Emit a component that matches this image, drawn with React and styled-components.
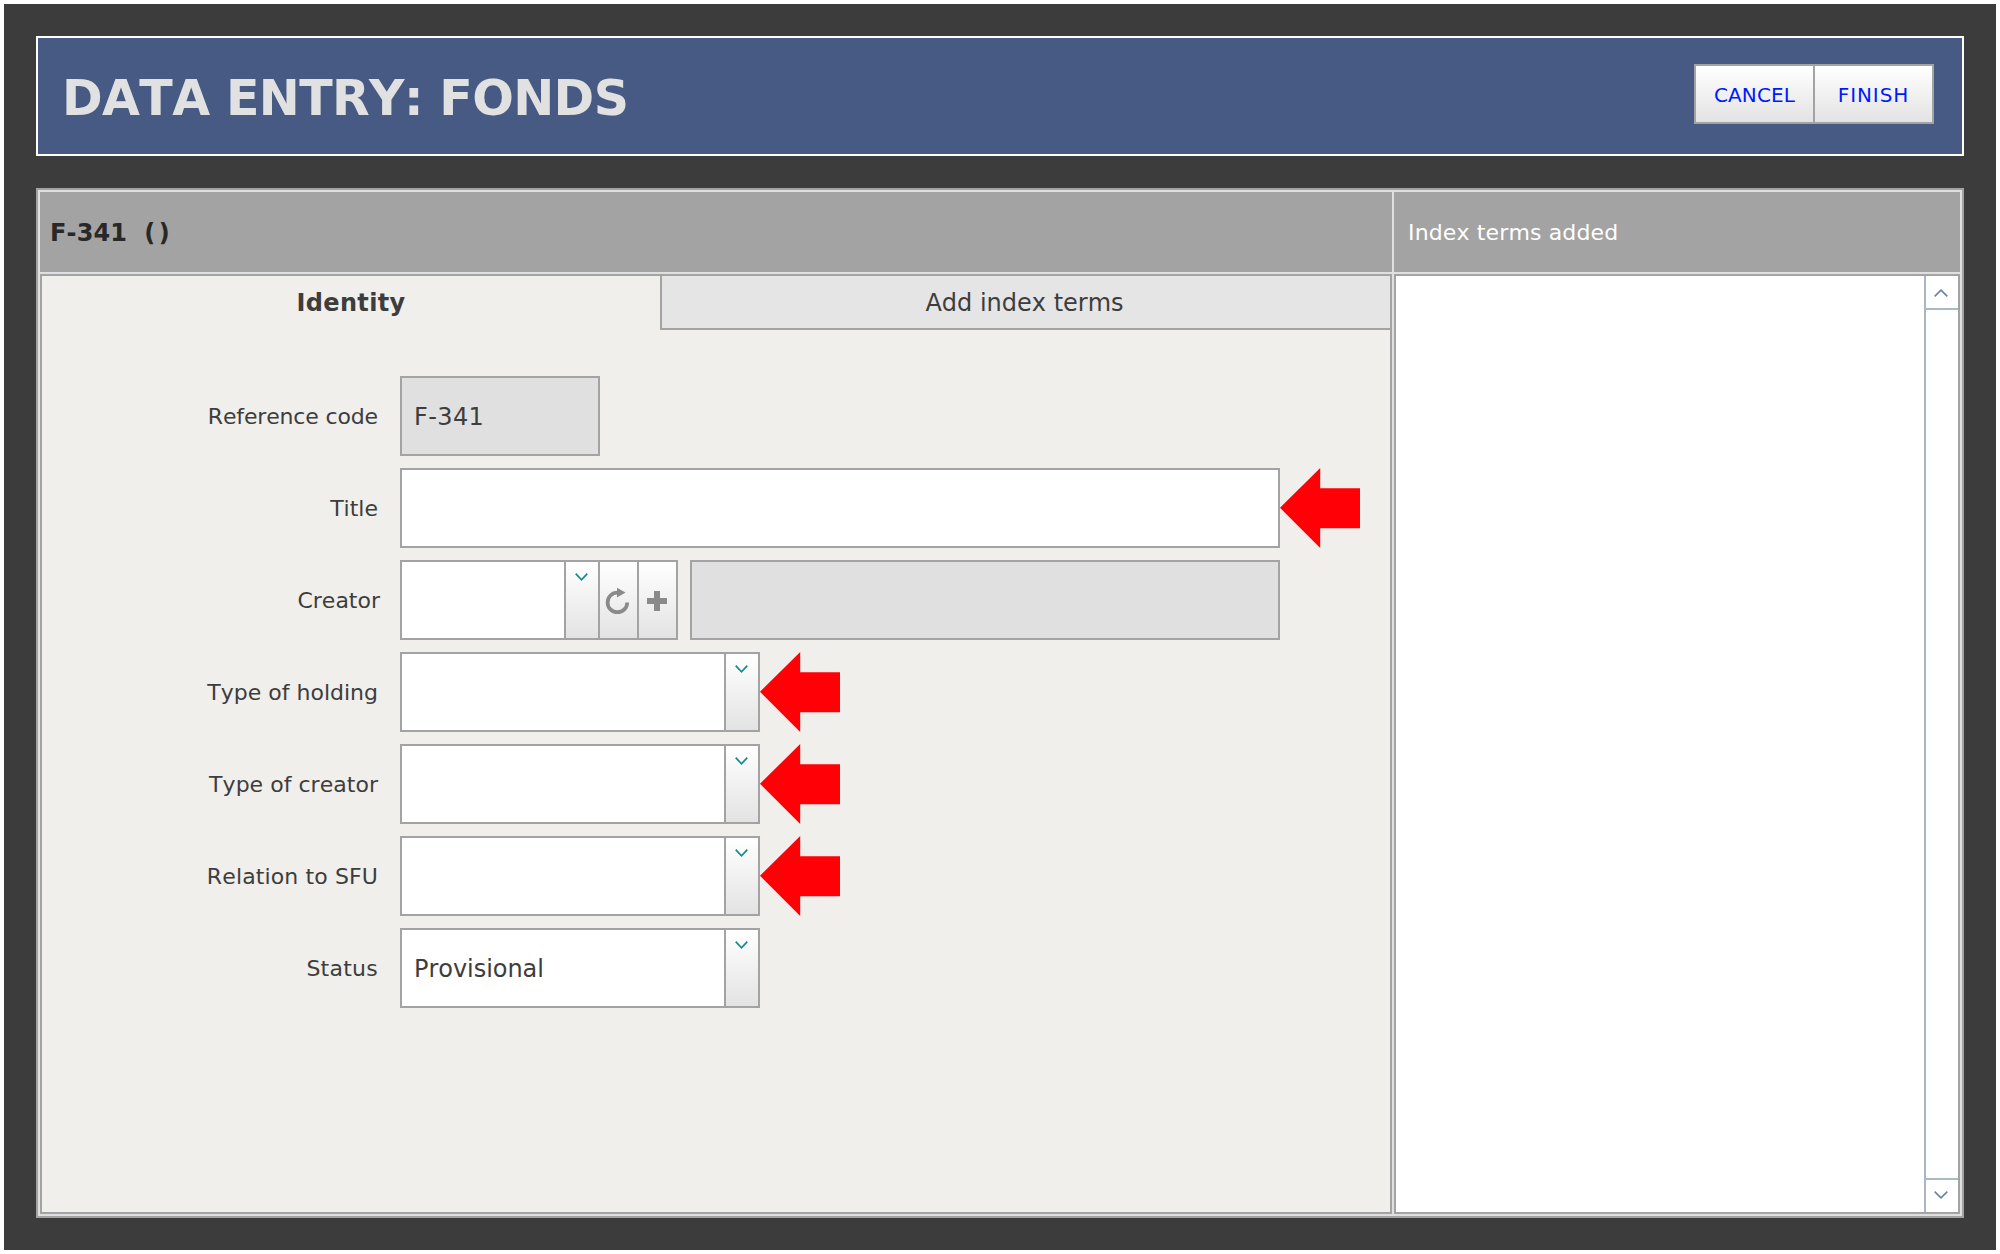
import React from "react";
import styled, { createGlobalStyle } from "styled-components";

const line = "#a3a3a3";
const pale = "#e0e0e0";
const shade = "linear-gradient(#ffffff, #f9f9f9 22%, #e3e3e3)";

const GlobalStyle = createGlobalStyle`
  * { box-sizing: border-box; }
  body {
    margin: 0; background: #fff; color: #3d3d3d;
    font-family: "DejaVu Sans", Verdana, sans-serif; font-kerning: none;
  }
`;
const Page = styled.div`
  width: 1992px; height: 1246px; margin: 4px; padding: 32px;
  background: #3c3c3c; display: flex; flex-direction: column; gap: 32px;
`;
const Banner = styled.header`
  height: 120px; border: 2px solid #fff; background: #475a84;
  display: flex; justify-content: space-between; align-items: flex-start;
  padding: 26px 28px 0 24px;
`;
const Heading = styled.h1`
  margin: 5px 0 0; font-size: 49px; line-height: 60px; font-weight: bold;
  letter-spacing: -0.62px; color: #e1e1e1;
`;
const ButtonGroup = styled.div`
  display: flex; height: 60px; border: 2px solid ${line};
`;
const ActionButton = styled.button`
  width: ${(p) => p.$width}px; border: 0; padding: 1px 0 0; background: ${shade};
  color: #0019ff; font: 20px "DejaVu Sans", Verdana, sans-serif; font-kerning: none;
  letter-spacing: ${(p) => p.$spacing}px;
  & + & { border-left: 2px solid ${line}; }
`;
const Panel = styled.main`
  flex: 1; display: grid; grid-template: 80px 1fr / 1352px 1fr; gap: 2px;
  border: 2px solid ${line}; padding: 2px; background: ${pale};
`;
const ColumnHeader = styled.div`
  background: ${line}; display: flex; align-items: center; color: #fff;
  padding: 1px 0 0 14px; font-size: 22px; letter-spacing: 0.14px;
`;
const RecordHeader = styled(ColumnHeader)`
  padding: 2px 0 0 10px; gap: 17px; font-size: 24px; font-weight: bold; color: #282828;
`;
const RecordTitle = styled.span`
  letter-spacing: 3.6px;
`;
const EntryPane = styled.section`
  border: 2px solid ${line}; background: #f0efeb;
`;
const Tabs = styled.nav`
  display: grid; grid-template-columns: 618px 1fr; height: 54px;
`;
const Tab = styled.div`
  display: flex; align-items: center; justify-content: center; font-size: 24px;
  ${(p) =>
    p.$active
      ? "font-weight: bold; letter-spacing: 0.34px;"
      : `background: #e5e5e5; border: solid ${line}; border-width: 0 0 2px 2px; padding: 2px 3px 0 0;`}
`;
const Form = styled.form`
  display: grid; gap: 12px; padding-top: 46px;
`;
const Row = styled.div`
  display: flex; height: 80px;
`;
const Label = styled.label`
  width: 358px; padding-right: ${(p) => p.$inset || 22}px;
  display: flex; align-items: center; justify-content: flex-end;
  font-size: 22px; white-space: nowrap; letter-spacing: ${(p) => p.$spacing || 0}px;
`;
const Field = styled.div`
  width: ${(p) => p.$width}px; border: 2px solid ${line};
  background: ${(p) => (p.$disabled ? pale : "#fff")};
  display: flex; margin-left: ${(p) => p.$gap || 0}px;
`;
const Value = styled.span`
  flex: 1; display: flex; align-items: center; padding: 2px 0 0 12px; font-size: 24px;
  letter-spacing: ${(p) => p.$spacing || 0}px;
`;
const FieldButton = styled.span`
  width: ${(p) => p.$width}px; border-left: 2px solid ${line}; background: ${shade};
  display: flex; justify-content: center; padding: ${(p) => p.$top}px 1px 0 0;
`;
const TermsPane = styled.section`
  border: 2px solid ${line}; background: #fff; display: flex; justify-content: flex-end;
`;
const Scrollbar = styled.div`
  width: 34px; border-left: 2px solid #a9b9c3;
  display: flex; flex-direction: column; justify-content: space-between;
`;
const ScrollButton = styled.div`
  height: 34px; display: flex; justify-content: center;
  padding: ${(p) => (p.$up ? 12 : 10)}px 2px 0 0;
  border: solid #a9b9c3; border-width: ${(p) => (p.$up ? "0 0 2px" : "2px 0 0")};
`;
const Icon = styled.svg`
  display: block; flex: none;
`;

const Chevron = ({ up, color = "#0e8c8c", width = 14 }) => (
  <Icon width={width} height="10" viewBox={`0 0 ${width} 10`} fill="none" stroke={color} strokeWidth="1.6">
    <path
      d={
        up
          ? "M.7 8.4 7 2.1 13.3 8.4"
          : `M.7 1.6 ${width / 2} 7.9 ${width - 0.7} 1.6`
      }
    />
  </Icon>
);
const Refresh = () => (
  <Icon width="26" height="28" viewBox="0 0 26 28">
    <path d="M22.2 15.4A9.8 9.8 0 1 1 12.4 5.6" fill="none" stroke="#8a8a8a" strokeWidth="3.7" />
    <path d="M12 .8 20.5 5.5 12 10.5Z" fill="#8a8a8a" />
  </Icon>
);
const Plus = () => (
  <Icon width="20" height="20" viewBox="0 0 20 20">
    <path d="M7 0h6v7h7v6h-7v7H7v-7H0V7h7Z" fill="#8a8a8a" />
  </Icon>
);
const RequiredArrow = () => (
  <Icon width="80" height="80" viewBox="0 0 80 80">
    <path d="M0 39.8 40.2 0V20.2H80V60.2H40.2V80Z" fill="#fe0006" />
  </Icon>
);
const Select = ({ label, spacing, value, required }) => (
  <Row>
    <Label $spacing={spacing}>{label}</Label>
    <Field $width={360}>
      <Value $spacing={-0.04}>{value}</Value>
      <FieldButton $width={34} $top={10}>
        <Chevron width={13} />
      </FieldButton>
    </Field>
    {required && <RequiredArrow />}
  </Row>
);

export default function App() {
  return (
    <>
      <GlobalStyle />
      <Page>
        <Banner>
          <Heading>DATA ENTRY: FONDS</Heading>
          <ButtonGroup>
            <ActionButton $width={117} $spacing={0.1}>CANCEL</ActionButton>
            <ActionButton $width={119} $spacing={0.9}>FINISH</ActionButton>
          </ButtonGroup>
        </Banner>
        <Panel>
          <RecordHeader>
            <span>F-341</span>
            <RecordTitle>()</RecordTitle>
          </RecordHeader>
          <ColumnHeader>Index terms added</ColumnHeader>
          <EntryPane>
            <Tabs>
              <Tab $active>Identity</Tab>
              <Tab>Add index terms</Tab>
            </Tabs>
            <Form>
              <Row>
                <Label $spacing={-0.15}>Reference code</Label>
                <Field $width={200} $disabled>
                  <Value $spacing={0.4}>F-341</Value>
                </Field>
              </Row>
              <Row>
                <Label>Title</Label>
                <Field $width={880} />
                <RequiredArrow />
              </Row>
              <Row>
                <Label $inset={20}>Creator</Label>
                <Field $width={278}>
                  <Value />
                  <FieldButton $width={34} $top={10}>
                    <Chevron width={13} />
                  </FieldButton>
                  <FieldButton $width={39} $top={25}>
                    <Refresh />
                  </FieldButton>
                  <FieldButton $width={39} $top={29}>
                    <Plus />
                  </FieldButton>
                </Field>
                <Field $width={590} $gap={12} $disabled />
              </Row>
              <Select label="Type of holding" required />
              <Select label="Type of creator" spacing={0.03} required />
              <Select label="Relation to SFU" spacing={0.12} required />
              <Select label="Status" spacing={0.25} value="Provisional" />
            </Form>
          </EntryPane>
          <TermsPane>
            <Scrollbar>
              <ScrollButton $up>
                <Chevron up color="#66869b" />
              </ScrollButton>
              <ScrollButton>
                <Chevron color="#66869b" />
              </ScrollButton>
            </Scrollbar>
          </TermsPane>
        </Panel>
      </Page>
    </>
  );
}
